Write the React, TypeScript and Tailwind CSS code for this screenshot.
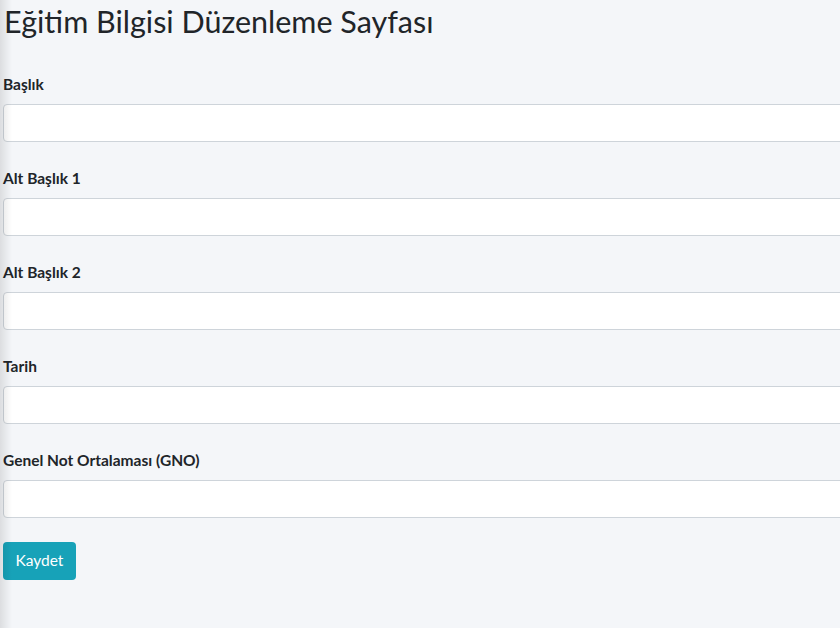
export default function App() {
  const fields = [
    { id: "baslik", label: "Başlık" },
    { id: "altbaslik1", label: "Alt Başlık 1" },
    { id: "altbaslik2", label: "Alt Başlık 2" },
    { id: "tarih", label: "Tarih" },
    { id: "gno", label: "Genel Not Ortalaması (GNO)" },
  ];

  return (
    <div
      className="relative min-h-[628px] w-full overflow-hidden bg-[#f4f6f9] text-[#212529]"
      style={{ fontFamily: "Lato, 'Noto Sans', sans-serif" }}
    >
      {/* shadow cast by the off-screen sidebar */}
      <div className="pointer-events-none absolute inset-y-0 left-0 z-10 w-3 bg-gradient-to-r from-black/10 to-transparent" />

      <div className="w-[900px] pl-[3px]">
        <h1 className="mb-[31px] pt-[2px] pl-[1px] text-[30.5px] font-normal leading-[38px]">
          Eğitim Bilgisi Düzenleme Sayfası
        </h1>

        <form>
          {fields.map((f) => (
            <div key={f.id} className="mb-[23px] flex flex-col">
              <label
                htmlFor={f.id}
                className="mb-[8px] pt-[1px] text-[15.5px] font-bold leading-[24px]"
              >
                {f.label}
              </label>
              <input
                id={f.id}
                type="text"
                className="h-[38px] w-full rounded-[4px] border border-[#ced4da] bg-white px-3 text-base outline-none"
              />
            </div>
          ))}

          <button
            type="button"
            className="mt-[1px] h-[38px] w-[73px] rounded-[4px] bg-[#17a2b8] text-[15.5px] text-white"
          >
            Kaydet
          </button>
        </form>
      </div>
    </div>
  );
}
